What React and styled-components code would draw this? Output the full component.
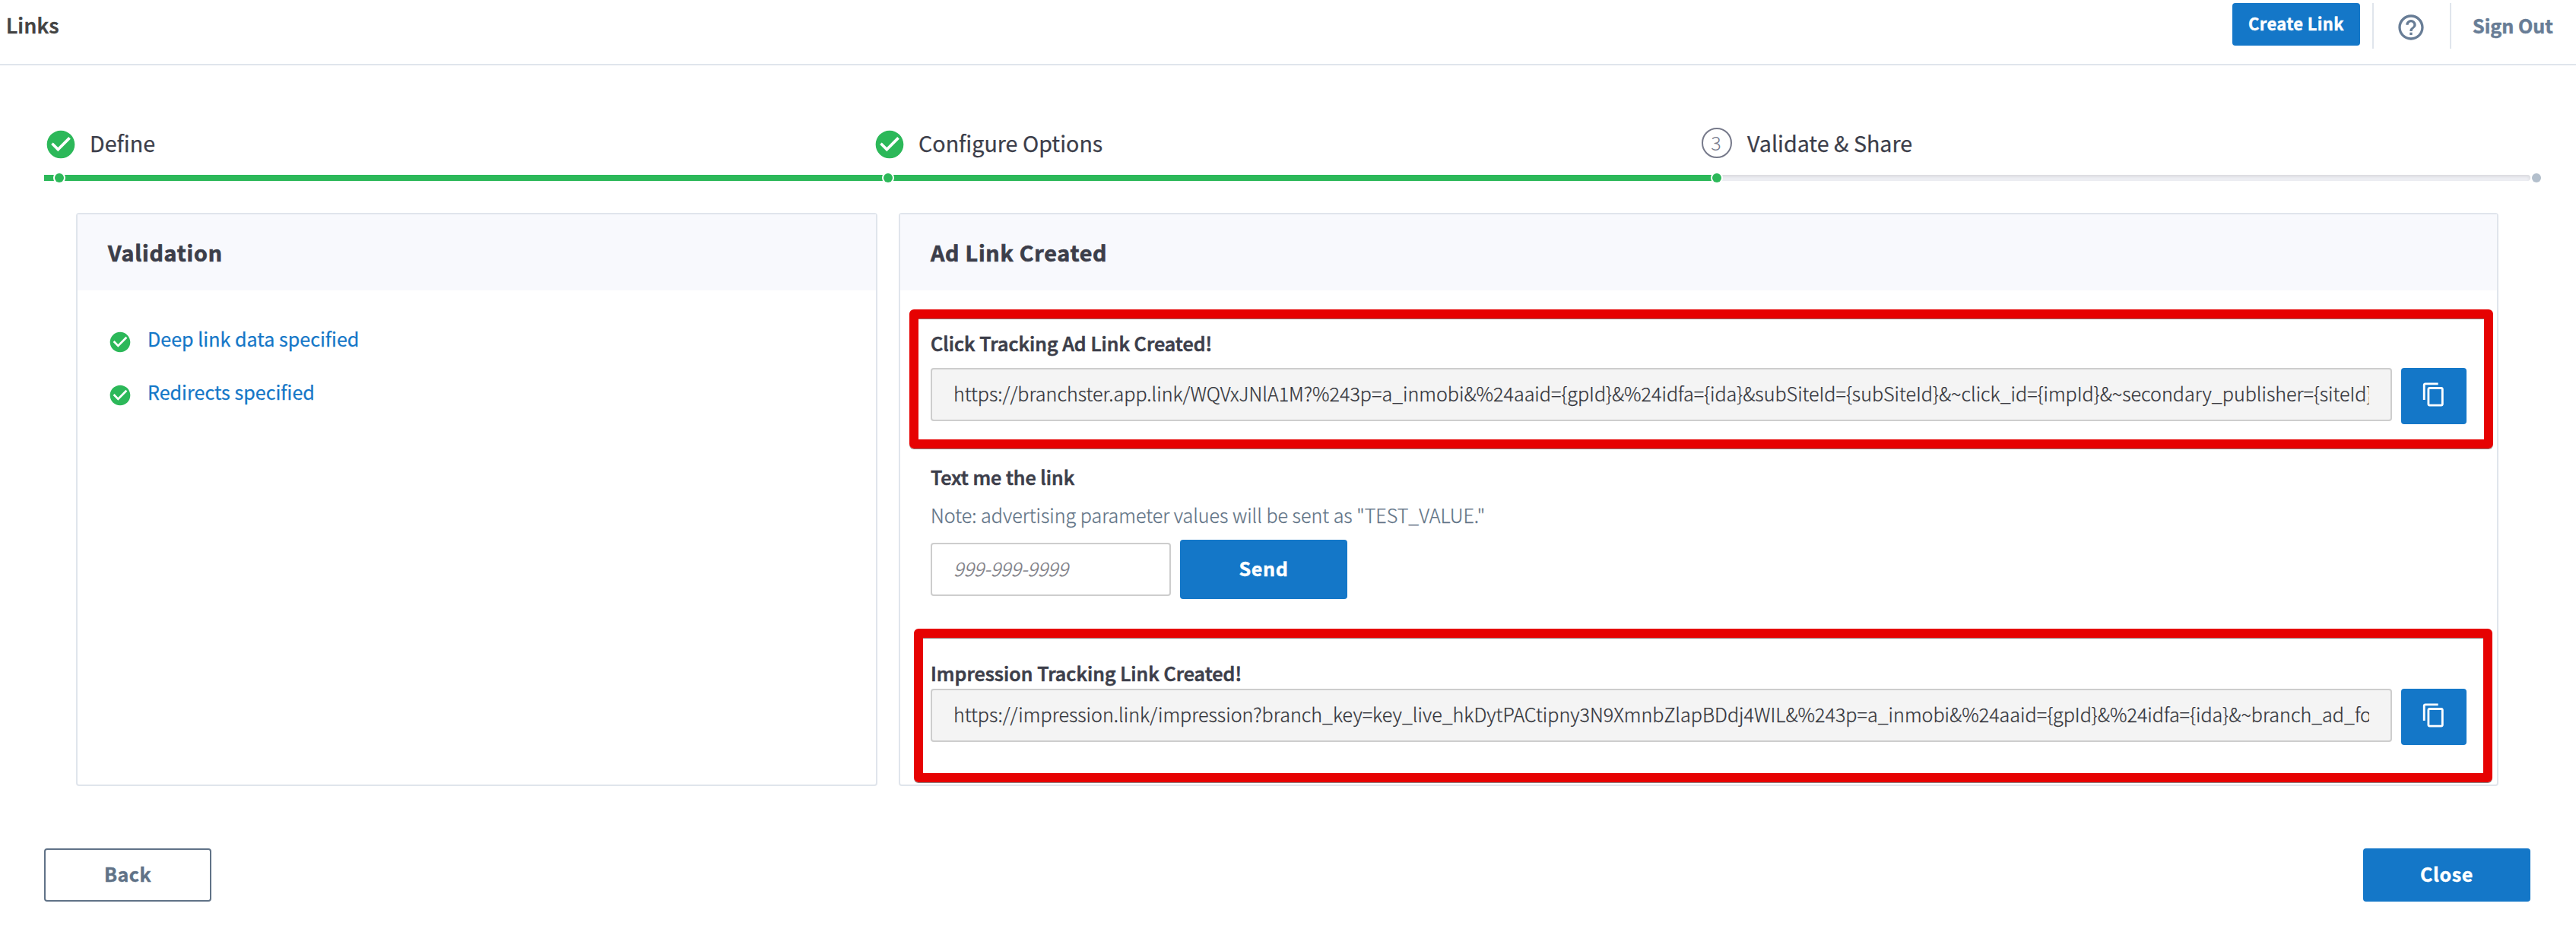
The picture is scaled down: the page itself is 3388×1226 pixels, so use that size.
import React from "react";
import styled, { createGlobalStyle } from "styled-components";

const color = {
  blue: "#1477c8",
  green: "#2cb859",
  ink: "#3c3e4a",
  slate: "#687d96",
  line: "#e0e5ec",
};

const GlobalStyle = createGlobalStyle`
  *, *::before, *::after { box-sizing: border-box; }
  body {
    margin: 0;
    background: #fff;
    color: ${color.ink};
    font-family: "Noto Sans CJK SC", "Noto Sans", sans-serif;
    font-size: 25.1px;
    -webkit-text-stroke-width: 0.25px;
  }
`;

const Page = styled.div`
  width: 3388px;
  height: 1226px;
  display: flex;
  flex-direction: column;
  overflow: hidden;
`;

/* ---------- top bar ---------- */

const TopBar = styled.header`
  display: flex;
  justify-content: space-between;
  align-items: flex-start;
  height: 86px;
  padding-left: 8px;
  border-bottom: 2px solid ${color.line};
`;

const PageTitle = styled.h1`
  margin: 0;
  font-size: 26.9px;
  font-weight: 500;
  line-height: 65px;
  letter-spacing: 0.35px;
  color: #434343;
  -webkit-text-stroke-width: 0.7px;
`;

const TopActions = styled.div`
  display: flex;
  align-items: flex-start;
`;

const Button = styled.button`
  flex: none;
  display: block;
  margin: 0;
  padding: 0;
  border: 0;
  border-radius: 4px;
  background: ${color.blue};
  color: #fff;
  font-family: inherit;
  font-size: 25.1px;
  font-weight: 700;
  letter-spacing: 0.62px;
  text-align: center;
  -webkit-text-stroke-width: 0.4px;
`;

const Label = styled.span`
  display: block;
  line-height: ${(p) => p.$line}px;
`;

const CreateButton = styled(Button)`
  width: 168px;
  height: 56px;
  margin: 4px 16px 0 0;
  padding-bottom: 3px;
  font-size: 22px;
  letter-spacing: 0.32px;
`;

const Divider = styled.div`
  width: 2px;
  height: 60px;
  margin-top: 4px;
  background: ${color.line};
`;

const HelpButton = styled.div`
  width: 100px;
  padding: 16px 0 0 29px;
  color: ${color.slate};
  line-height: 0;
`;

const SignOut = styled.div`
  width: 164px;
  padding-left: 28px;
  font-weight: 700;
  line-height: 66px;
  color: ${color.slate};
  white-space: nowrap;
  -webkit-text-stroke-width: 0.5px;
`;

/* ---------- stepper ---------- */

const Stepper = styled.nav`
  padding: 82px 0 0 58px;
`;

const Steps = styled.div`
  display: grid;
  grid-template-columns: 1090px 1090px 1fr;
  height: 62px;
`;

const Step = styled.div`
  display: flex;
  align-items: flex-start;
`;

const StepIcon = styled.div`
  width: 60px;
  color: ${color.green};
  line-height: 0;
`;

const StepNumber = styled.div`
  width: 40px;
  height: 40px;
  padding-right: 2px;
  border: 2px solid #777a8b;
  border-radius: 50%;
  font-weight: 300;
  line-height: 34px;
  text-align: center;
  color: #777a8b;
  -webkit-text-stroke-width: 0;
`;

const StepName = styled.div`
  font-size: 28.65px;
  line-height: 39px;
`;

const Track = styled.div`
  position: relative;
  width: 3270px;
  height: 8px;
  border-radius: 0 4px 4px 0;
  background: #eeeff4;
  box-shadow: inset 0 2px 4px rgba(0, 0, 0, 0.1);
`;

const TrackFill = styled.div`
  width: 2200px;
  height: 8px;
  background: ${color.green};
`;

const TrackDot = styled.div`
  position: absolute;
  top: -2px;
  left: ${(p) => p.$at}px;
  width: 12px;
  height: 12px;
  border-radius: 50%;
  background: ${(p) => (p.$done ? color.green : "#b3bfcc")};
  box-shadow: 0 0 0 2px #fff;
`;

/* ---------- cards ---------- */

const Cards = styled.main`
  display: flex;
  gap: 28px;
  margin: 42px 102px 0 100px;
  height: 754px;
`;

const Card = styled.section`
  width: ${(p) => p.$width}px;
  border: 2px solid ${color.line};
  border-radius: 4px;
`;

const CardTitle = styled.h2`
  margin: 0;
  height: 100px;
  padding-left: 40px;
  background: #f8f9fd;
  font-size: 28.65px;
  font-weight: 700;
  line-height: 99px;
  letter-spacing: 0.76px;
  -webkit-text-stroke-width: 0.7px;
`;

const CheckList = styled.ul`
  margin: 0;
  padding: 28px 0 0 40px;
  list-style: none;
`;

const CheckItem = styled.li`
  display: flex;
  align-items: flex-start;
  height: 70px;
  line-height: 70px;
  color: ${color.blue};
`;

const CheckMark = styled.div`
  width: 52px;
  padding-top: 24px;
  line-height: 0;
  color: ${color.green};
`;

const CardBody = styled.div`
  padding: 49px 40px 0 40px;
`;

const Group = styled.div`
  position: relative;
  margin-bottom: ${(p) => p.$after || 0}px;
`;

const GroupLabel = styled.div`
  height: 40px;
  line-height: 40px;
  font-weight: 500;
  letter-spacing: ${(p) => p.$spacing || 0}px;
  -webkit-text-stroke-width: 0.7px;
`;

const Note = styled.div`
  margin-top: 10px;
  height: 40px;
  line-height: 40px;
  font-weight: 300;
  letter-spacing: -0.01px;
  color: #5f7386;
`;

const FieldRow = styled.div`
  display: flex;
  gap: 12px;
  align-items: ${(p) => (p.$center ? "center" : "flex-start")};
  margin-top: ${(p) => p.$above}px;
`;

const Field = styled.div`
  width: ${(p) => p.$width}px;
  height: 70px;
  padding: 0 28px;
  border: 2px solid #cdcdcd;
  border-radius: 4px;
  background: ${(p) => (p.$readOnly ? "#f4f4f4" : "#fff")};
`;

const FieldText = styled.div`
  overflow: hidden;
  height: 66px;
  line-height: 62px;
  white-space: nowrap;
  font-weight: 300;
  font-style: ${(p) => (p.$placeholder ? "italic" : "normal")};
  letter-spacing: ${(p) => p.$spacing || 0}px;
  color: ${(p) => (p.$placeholder ? "#7c7c84" : "#34363c")};
`;

const CopyButton = styled(Button)`
  width: 86px;
  height: 74px;
  padding: 0 0 4px;
  display: flex;
  align-items: center;
  justify-content: center;
`;

const SendButton = styled(Button)`
  width: 220px;
  height: 78px;
  padding-bottom: 4px;
`;

const Highlight = styled.div`
  position: absolute;
  inset: ${(p) => p.$inset};
  border: 12px solid #e60202;
  border-radius: 6px;
  box-shadow: 0 1px 0 #8a7c7c, inset 0 1px 0 #8c7272;
  pointer-events: none;
`;

/* ---------- footer ---------- */

const Footer = styled.footer`
  display: flex;
  justify-content: space-between;
  margin: 82px 60px 0 58px;
`;

const FooterButton = styled(Button)`
  width: 220px;
  height: 70px;
  padding-bottom: 4px;
`;

const BackButton = styled(FooterButton)`
  border: 2px solid #607287;
  background: #fff;
  color: #607287;
  letter-spacing: 0.4px;
`;

/* ---------- icons ---------- */

const CheckCircle = ({ size }) => (
  <svg width={size} height={size} viewBox="0 0 24 24" fill="currentColor">
    <path d="M12 2C6.48 2 2 6.48 2 12s4.48 10 10 10 10-4.48 10-10S17.52 2 12 2zm-2 15l-5-5 1.41-1.41L10 14.17l7.59-7.59L19 8l-9 9z" />
  </svg>
);

const HelpCircle = () => (
  <svg width="40" height="40" viewBox="0 0 24 24" fill="currentColor">
    <path d="M11 18h2v-2h-2v2zm1-16C6.48 2 2 6.48 2 12s4.48 10 10 10 10-4.48 10-10S17.52 2 12 2zm0 18c-4.41 0-8-3.59-8-8s3.59-8 8-8 8 3.59 8 8-3.59 8-8 8zm0-14c-2.21 0-4 1.79-4 4h2c0-1.1.9-2 2-2s2 .9 2 2c0 2-3 1.75-3 5h2c0-2.25 3-2.5 3-5 0-2.21-1.79-4-4-4z" />
  </svg>
);

const CopyIcon = () => (
  <svg width="34" height="34" viewBox="0 0 24 24" fill="currentColor">
    <path d="M16 1H4c-1.1 0-2 .9-2 2v14h2V3h12V1zm3 4H8c-1.1 0-2 .9-2 2v14c0 1.1.9 2 2 2h11c1.1 0 2-.9 2-2V7c0-1.1-.9-2-2-2zm0 16H8V7h11v14z" />
  </svg>
);

/* ---------- content ---------- */

const checks = ["Deep link data specified", "Redirects specified"];

const clickUrl =
  "https://branchster.app.link/WQVxJNlA1M?%243p=a_inmobi&%24aaid={gpId}&%24idfa={ida}&subSiteId={subSiteId}&~click_id={impId}&~secondary_publisher={siteId}";

const impressionUrl =
  "https://impression.link/impression?branch_key=key_live_hkDytPACtipny3N9XmnbZlapBDdj4WIL&%243p=a_inmobi&%24aaid={gpId}&%24idfa={ida}&~branch_ad_fo";

const LinkField = ({ url, above, spacing }) => (
  <FieldRow $above={above}>
    <Field $width={1922} $readOnly>
      <FieldText $spacing={spacing}>{url}</FieldText>
    </Field>
    <CopyButton aria-label="Copy">
      <CopyIcon />
    </CopyButton>
  </FieldRow>
);

export default function App() {
  return (
    <Page>
      <GlobalStyle />
      <TopBar>
        <PageTitle>Links</PageTitle>
        <TopActions>
          <CreateButton>
            <Label $line={53}>Create Link</Label>
          </CreateButton>
          <Divider />
          <HelpButton>
            <HelpCircle />
          </HelpButton>
          <Divider />
          <SignOut>Sign Out</SignOut>
        </TopActions>
      </TopBar>

      <Stepper>
        <Steps>
          <Step>
            <StepIcon>
              <CheckCircle size={44} />
            </StepIcon>
            <StepName>Define</StepName>
          </Step>
          <Step>
            <StepIcon>
              <CheckCircle size={44} />
            </StepIcon>
            <StepName>Configure Options</StepName>
          </Step>
          <Step>
            <StepIcon>
              <StepNumber>3</StepNumber>
            </StepIcon>
            <StepName>Validate &amp; Share</StepName>
          </Step>
        </Steps>
        <Track>
          <TrackFill />
          <TrackDot $at={14} $done />
          <TrackDot $at={1104} $done />
          <TrackDot $at={2194} $done />
          <TrackDot $at={3272} />
        </Track>
      </Stepper>

      <Cards>
        <Card $width={1054}>
          <CardTitle>Validation</CardTitle>
          <CheckList>
            {checks.map((text) => (
              <CheckItem key={text}>
                <CheckMark>
                  <CheckCircle size={32} />
                </CheckMark>
                {text}
              </CheckItem>
            ))}
          </CheckList>
        </Card>

        <Card $width={2104}>
          <CardTitle>Ad Link Created</CardTitle>
          <CardBody>
            <Group $after={49}>
              <GroupLabel $spacing={0.05}>Click Tracking Ad Link Created!</GroupLabel>
              <LinkField url={clickUrl} above={13} spacing={-0.012} />
              <Highlight $inset="-24px -35px -32px -28px" />
            </Group>
            <Group $after={77}>
              <GroupLabel>Text me the link</GroupLabel>
              <Note>Note: advertising parameter values will be sent as "TEST_VALUE."</Note>
              <FieldRow $above={13} $center>
                <Field $width={316}>
                  <FieldText $placeholder>999-999-9999</FieldText>
                </Field>
                <SendButton>
                  <Label $line={74}>Send</Label>
                </SendButton>
              </FieldRow>
            </Group>
            <Group>
              <GroupLabel $spacing={0.06}>Impression Tracking Link Created!</GroupLabel>
              <LinkField url={impressionUrl} above={1} />
              <Highlight $inset="-38px -34px -49px -22px" />
            </Group>
          </CardBody>
        </Card>
      </Cards>

      <Footer>
        <BackButton>
          <Label $line={62}>Back</Label>
        </BackButton>
        <FooterButton>
          <Label $line={66}>Close</Label>
        </FooterButton>
      </Footer>
    </Page>
  );
}
